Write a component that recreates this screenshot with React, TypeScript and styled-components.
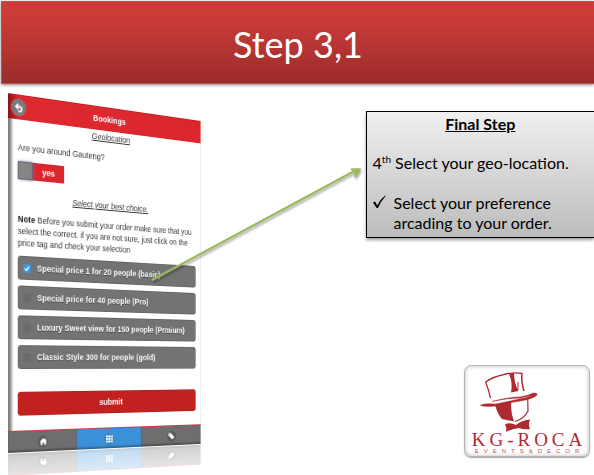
import React, { useState } from "react";
import styled, { createGlobalStyle } from "styled-components";

const GlobalStyle = createGlobalStyle`
  *, *::before, *::after { box-sizing: border-box; }
  body { margin: 0; background: #fff; }
  button { border: 0; padding: 0; margin: 0; font: inherit; color: inherit; background: none; cursor: pointer; }
  h1, h2, h3, p { margin: 0; padding: 0; font-weight: inherit; font-size: inherit; }
`;

const Slide = styled.div`
  min-height: 100vh;
  display: flex;
  flex-direction: column;
  overflow: hidden;
  font-family: Lato, "Open Sans", sans-serif;
  color: #000;
`;

const Banner = styled.header`
  height: 83px;
  margin: 1px 0 0 1px;
  display: flex;
  align-items: center;
  justify-content: center;
  color: #fff;
  background: linear-gradient(#cf3c38 0%, #ca3b38 22%, #9b2c2a 100%);
  border: 1px solid #c0504d;
  border-width: 1px 0 1px 1px;
  box-shadow: 0 1px 3px rgba(0, 0, 0, 0.5);
`;

const Title = styled.h1`
  font-size: 36px;
  line-height: 44px;
  padding-top: 3px;
`;

const Content = styled.main`
  flex: 1;
  position: relative;
  display: grid;
  grid-template-columns: 8fr 5fr;
`;

const PhoneStage = styled.section`
  padding: 9px 0 0 8px;
  perspective: 953px;
  perspective-origin: 8px 281px;
`;

const Phone = styled.div`
  width: 241px;
  height: 360px;
  display: flex;
  flex-direction: column;
  background: #fff;
  transform-origin: 0 50%;
  transform: rotateY(27deg);
  box-shadow: inset 5px 0 3px -1px rgba(0, 0, 0, 0.5), inset -1px 0 0 #e2e2e2;
  font-family: "Liberation Sans", Arial, sans-serif;
  font-size: 9px;
  line-height: 12px;
  color: #333;
  -webkit-box-reflect: below 1px linear-gradient(transparent 86%, rgba(0, 0, 0, 0.32));
`;

const PhoneBar = styled.div`
  height: 25px;
  display: grid;
  grid-template-columns: 26px 1fr 26px;
  align-items: center;
  text-align: center;
  font-weight: bold;
  color: #fff;
  background: linear-gradient(90deg, #8d1015, #dd2930 5%, #dc262d);
  border-top: 1px solid #c41e24;
`;

const BackButton = styled.button`
  width: 16px;
  height: 16px;
  margin-left: 4px;
  display: grid;
  place-items: center;
  border-radius: 50%;
  background: #7b7b7b;
  box-shadow: 0 0 0 1px #a8686a;
`;

const Form = styled.form`
  flex: 1;
  display: flex;
  flex-direction: column;
  padding: 1px 7px 13px 11px;
`;

const Heading = styled.h3`
  text-align: center;
  font-style: italic;
  text-decoration: underline;
`;

const Question = styled.p`
  padding: 9px 0 8px;
`;

const Switch = styled.label`
  width: 54px;
  height: 18px;
  margin-bottom: 13px;
  display: flex;
  align-items: center;
  background: #dc262d;
  color: #fff;
  font-weight: bold;
  span { flex: 1; text-align: center; }
`;

const SwitchInput = styled.input`
  appearance: none;
  width: 17px;
  height: 18px;
  margin: 0;
  background: #858585;
  border: 1px solid #666;
  box-shadow: 1px 0 3px #7a62a0;
`;

const Note = styled.p`
  padding: 9px 0 7px;
  b { color: #111; }
`;

const Options = styled.div`
  display: flex;
  flex-direction: column;
  gap: 6px;
  margin-bottom: 23px;
`;

const Option = styled.label`
  height: 24px;
  padding: 0 6px;
  display: flex;
  align-items: center;
  gap: 7px;
  border-radius: 4px;
  background: #737373;
  box-shadow: inset 0 0 0 1px #666;
  color: #fff;
  font-weight: bold;
  text-shadow: 0 1px 0 #444;
`;

const Tick = styled.input`
  appearance: none;
  width: 9px;
  height: 9px;
  margin: 0;
  border-radius: 2px;
  background: #6b6b6b;
  &:checked {
    background: #3a96e0 url("data:image/svg+xml,%3Csvg xmlns='http://www.w3.org/2000/svg' viewBox='0 0 14 14'%3E%3Cpath d='M3 7l3 3 5-6' fill='none' stroke='white' stroke-width='2.4'/%3E%3C/svg%3E") center / contain no-repeat;
  }
`;

const Submit = styled.button`
  height: 24px;
  border-radius: 4px;
  background: #c3211f;
  box-shadow: inset 0 0 0 1px #ab2523;
  color: #fff;
  font-weight: bold;
`;

const Tabs = styled.nav`
  height: 22px;
  display: grid;
  grid-template-columns: repeat(3, 1fr);
  border-top: 1px solid #d43a40;
`;

const Tab = styled.button<{ $active?: boolean }>`
  display: grid;
  place-items: center;
  background: ${(p) => (p.$active ? "#3b91d8" : "#6e6e6e")};
  box-shadow: inset 0 -2px 2px rgba(0, 0, 0, 0.3);
`;

const TabDisc = styled.span<{ $active?: boolean }>`
  width: 12px;
  height: 12px;
  display: grid;
  place-items: center;
  border-radius: 50%;
  background: ${(p) => (p.$active ? "#3581c2" : "#5a5a5a")};
`;

const Aside = styled.aside`
  display: flex;
  flex-direction: column;
  justify-content: space-between;
  padding: 27px 0 18px;
`;

const Card = styled.section`
  padding: 2px 0 4px 6px;
  font-size: 16px;
  line-height: 20px;
  background: linear-gradient(#f0f0f0, #bcbcbc);
  border: 1px solid #000;
  border-right: 0;
  box-shadow: 0 2px 3px rgba(0, 0, 0, 0.4);
`;

const CardTitle = styled.h2`
  padding-right: 6px;
  text-align: center;
  font-weight: bold;
  text-decoration: underline;
  margin-bottom: 19px;
`;

const CardLine = styled.p`
  margin-bottom: 20px;
  white-space: nowrap;
  sup { font-size: 10px; line-height: 0; }
`;

const CheckItem = styled.div`
  display: grid;
  grid-template-columns: 21px 1fr;
  svg { margin-top: 2px; }
`;

const Logo = styled.figure`
  align-self: flex-end;
  width: 126px;
  height: 92px;
  margin: 0 4px 0 0;
  display: flex;
  flex-direction: column;
  align-items: center;
  border-radius: 7px;
  border: 1px solid #b5b5b5;
  box-shadow: inset 0 0 4px rgba(0, 0, 0, 0.28), 0 1px 1px rgba(0, 0, 0, 0.35);
  color: #ae2a33;
`;

const LogoName = styled.div`
  font: 19px/14px "Liberation Serif", serif;
  letter-spacing: 4px;
  padding-left: 4px;
`;

const LogoTag = styled.div`
  font: 6px/8px "Liberation Sans", sans-serif;
  letter-spacing: 5px;
  padding-left: 5px;
  color: #b9545b;
`;

const Arrow = styled.svg`
  position: absolute;
  left: 150px;
  top: 80px;
  pointer-events: none;
  filter: drop-shadow(1px 2px 1px rgba(0, 0, 0, 0.35));
`;

const packages = [
  "Special price 1 for 20 people (basic)",
  "Special price for 40 people (Pro)",
  "Luxury Sweet view for 150 people (Prmium)",
  "Classic Style 300 for people (gold)",
];

export default function App() {
  const [chosen, setChosen] = useState(0);
  const [nearby, setNearby] = useState(true);
  return (
    <Slide>
      <GlobalStyle />
      <Banner>
        <Title>Step 3,1</Title>
      </Banner>
      <Content>
        <PhoneStage>
          <Phone>
            <PhoneBar>
              <BackButton aria-label="Back">
                <svg width="11" height="11" viewBox="0 0 12 11" fill="none" stroke="#fff" strokeWidth="1.7">
                  <path d="M5 1L2 4l3 3M2 4h4.500c4 0 4 5 0 5.200H5" />
                </svg>
              </BackButton>
              <h2>Bookings</h2>
            </PhoneBar>
            <Form onSubmit={(e) => e.preventDefault()}>
              <Heading>Geolocation</Heading>
              <Question>Are you around Gauteng?</Question>
              <Switch>
                <SwitchInput type="checkbox" role="switch" checked={nearby} onChange={() => setNearby(!nearby)} />
                <span>yes</span>
              </Switch>
              <Heading>Select your best choice.</Heading>
              <Note>
                <b>Note</b> Before you submit your order make sure that you select the correct. if you are not sure,
                just click on the price tag and check your selection
              </Note>
              <Options>
                {packages.map((name, i) => (
                  <Option key={name}>
                    <Tick type="checkbox" checked={chosen === i} onChange={() => setChosen(i)} />
                    {name}
                  </Option>
                ))}
              </Options>
              <Submit type="submit">submit</Submit>
            </Form>
            <Tabs>
              <Tab aria-label="Home">
                <TabDisc>
                  <svg width="9" height="8" viewBox="0 0 10 8" fill="#fff">
                    <path d="M5 0L0 4.300h1.500V8H4V5.400h2V8h2.500V4.300H10L8.400 3V.7H7.200V2z" />
                  </svg>
                </TabDisc>
              </Tab>
              <Tab aria-label="Bookings" $active>
                <TabDisc $active>
                  <svg width="9" height="8" viewBox="0 0 10 8" fill="#fff">
                    {[0, 3, 6].map((y) =>
                      [0, 3.5, 7].map((x) => <rect key={`${x}-${y}`} x={x} y={y} width="2.8" height="2.2" />)
                    )}
                  </svg>
                </TabDisc>
              </Tab>
              <Tab aria-label="Prices">
                <TabDisc>
                  <svg width="9" height="8" viewBox="0 0 10 8" fill="#fff">
                    <path fillRule="evenodd" d="M1 0h3.500L10 5 6.500 8 1 3zM2.200 1v1h1V1z" />
                  </svg>
                </TabDisc>
              </Tab>
            </Tabs>
          </Phone>
        </PhoneStage>
        <Aside>
          <Card>
            <CardTitle>Final Step</CardTitle>
            <CardLine>
              4<sup>th</sup> Select your geo-location.
            </CardLine>
            <CheckItem>
              <svg width="13" height="14" viewBox="0 0 13 14">
                <path d="M0 7.600L2 6.500 4.200 10.500Q7 4.500 12 0.500L12.600 1Q8 6 5 13H3.600Z" />
              </svg>
              <p>
                Select your preference
                <br />
                arcading to your order.
              </p>
            </CheckItem>
          </Card>
          <Logo>
            <svg width="124" height="67" viewBox="465 366 124 67" fill="#ae2a33">
              <path d="M490.500 398Q489 391 485.700 382Q492 377 506 374Q515 372 522 373.500" fill="none" stroke="#ae2a33" strokeWidth="1.300" />
              <path d="M522 373Q521 382 524 391" fill="none" stroke="#ae2a33" strokeWidth="1.500" />
              <path d="M509 374L514 373Q514 383 518.500 391L511 392.500Q513 383 509 374Z" />
              <path d="M518 382V390" fill="none" stroke="#ae2a33" />
              <path d="M492 401.500Q508 397 520 397Q530 395 533 393Q538 393 537 395Q533 399 520 401Q506 403 496 406Q486 407 480.500 405.500Q482 403 496 404Q515 400 533 396Q527 396 520 398Q507 398 492 401.500Z" stroke="#ae2a33" strokeWidth="0.500" />
              <path d="M495 405L511.500 401Q510 411 514 421.500L502 419Q498 415 495 405Z" />
              <path d="M527.700 398L528 411Q524 419 515 421.500" fill="none" stroke="#ae2a33" strokeWidth="1.200" />
              <path d="M505 424Q511 422 516 425Q522 420 530 419.500Q528 424 530 429Q524 430 519 428Q511 429 506 432Q507 428 505 424Z" />
            </svg>
            <LogoName>KG-ROCA</LogoName>
            <LogoTag>EVENTS&amp;DECOR</LogoTag>
          </Logo>
        </Aside>
        <Arrow width="220" height="122" viewBox="150 164 220 122" fill="none" stroke="#9bbb59" strokeWidth="2">
          <path d="M152 280L358 169" />
          <path d="M351 169H360L355 177L355.500 171Z" fill="#9bbb59" strokeWidth="1.500" />
        </Arrow>
      </Content>
    </Slide>
  );
}
